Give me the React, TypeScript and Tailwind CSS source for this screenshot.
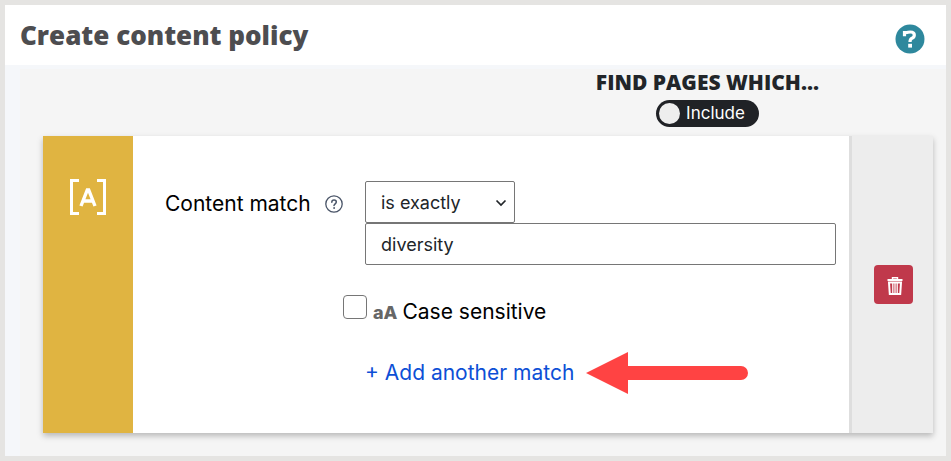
import { useState } from "react";

function HelpBadge() {
    return (
        <svg viewBox="0 0 30 30" className="size-[30px]" aria-hidden="true">
            <circle cx="15" cy="15" r="14.5" fill="#2e889d" />
            <path
                d="M9.500 12.300V8.500H12M11 8.800Q13 8 15.300 8Q19.300 8 19.300 11Q19.300 13.400 17 14.200Q15 15 15 18"
                fill="none"
                stroke="#fff"
                strokeWidth="3.200"
            />
            <rect x="13.200" y="19.800" width="3.800" height="3.800" fill="#fff" />
        </svg>
    );
}

function ContentIcon() {
    return (
        <svg viewBox="0 0 36 36" className="size-9" aria-hidden="true">
            <path d="M9 1.500H1.500V34.500H9M27 1.500H34.500V34.500H27" fill="none" stroke="#fff" strokeWidth="3" />
            <path
                d="M11 27L17.300 11H18.700L25 27M13.500 22H22.500"
                fill="none"
                stroke="#fff"
                strokeWidth="3.400"
            />
        </svg>
    );
}

function HelpIcon() {
    return (
        <svg viewBox="0 0 18 18" className="size-[18px]" fill="none" stroke="#4a5568" strokeLinecap="round" aria-hidden="true">
            <circle cx="9" cy="9" r="8.200" strokeWidth="1.300" />
            <path d="M6.800 7.200C6.800 4.200 11.300 4.300 11.300 7.100C11.300 8.800 9 8.900 9 10.600" strokeWidth="1.500" />
            <circle cx="9" cy="13" r="0.500" fill="#4a5568" strokeWidth="0.800" />
        </svg>
    );
}

function TrashIcon() {
    return (
        <svg viewBox="0 0 16 18" className="h-[18px] w-4" fill="none" stroke="#fff" aria-hidden="true">
            <path d="M5.500 2V0.800H10.500V2" strokeWidth="1.400" />
            <path d="M0.500 3H15.500" strokeWidth="2" />
            <path d="M2 5.500H14L13.200 17H2.800Z" strokeWidth="2" />
            <path d="M5.800 6V16M8 6V16M10.200 6V16" strokeWidth="1.300" />
        </svg>
    );
}

function Arrow() {
    return (
        <svg viewBox="0 0 162 42" className="h-[42px] w-[162px]" fill="#ff4343" aria-hidden="true">
            <path d="M0 21L42 0V14H155A7 7 0 0 1 155 28H42V42Z" />
        </svg>
    );
}

export default function App() {
    const [include, setInclude] = useState(true);
    const [mode, setMode] = useState("exactly");
    const [value, setValue] = useState("diversity");

    return (
        <div className="border-[5px] border-[#e5e4e2] bg-white font-['Inter',sans-serif] text-black">
            <header className="flex h-[60px] items-center justify-between pr-[21px] pl-[15px]">
                <h1 className="font-['Open_Sans',sans-serif] text-[26px] leading-9 font-extrabold text-[#4d4d50]">
                    Create content policy
                </h1>
                <button type="button" aria-label="Help" className="mt-2">
                    <HelpBadge />
                </button>
            </header>

            <main className="bg-[#f5f7fa] pt-1 pl-[15px]">
                <div className="bg-[#f5f5f5] pr-[13px] pb-[23px] pl-[23px]">
                    <div className="ml-auto flex w-1/2 flex-col items-center pr-1.5 pb-[9px]">
                        <h2 className="font-['Open_Sans',sans-serif] text-[21px] leading-[26px] font-extrabold whitespace-nowrap text-[#212529]">
                            FIND PAGES WHICH...
                        </h2>
                        <button
                            type="button"
                            role="switch"
                            aria-checked={include}
                            onClick={() => setInclude(!include)}
                            className="mt-[5px] flex h-[27px] items-center gap-1.5 rounded-full bg-[#202226] pr-3.5 pb-0.5 pl-[3px] text-[17px] leading-6 text-white"
                        >
                            <span className="mt-0.5 size-[21px] rounded-full bg-[#eee]" />
                            {include ? "Include" : "Exclude"}
                        </button>
                    </div>

                    <section className="flex min-h-[297px] shadow-[0_3px_6px_rgba(0,0,0,0.25)]">
                        <div className="flex w-[90px] shrink-0 justify-center bg-[#e0b441] pt-[43px]">
                            <ContentIcon />
                        </div>

                        <div className="flex-1 bg-white pt-[45px] pr-[13px] pl-8">
                            <div className="flex">
                                <div className="flex h-[45px] w-[200px] shrink-0 items-center gap-3.5 text-[21px]">
                                    <label htmlFor="mode" className="whitespace-nowrap">Content match</label>
                                    <button type="button" aria-label="About content match">
                                        <HelpIcon />
                                    </button>
                                </div>
                                <div className="flex-1 text-lg text-[#212529]">
                                    <div className="relative w-[150px]">
                                        <select
                                            id="mode"
                                            value={mode}
                                            onChange={(e) => setMode(e.target.value)}
                                            className="block h-[42px] w-full appearance-none rounded-xs border border-[#767676] bg-white pt-0.5 pl-[15px]"
                                        >
                                            <option value="exactly">is exactly</option>
                                            <option value="contains">contains</option>
                                        </select>
                                        <svg
                                            viewBox="0 0 12 8"
                                            className="pointer-events-none absolute top-[18px] right-2 h-2 w-3"
                                            fill="none"
                                            stroke="#212529"
                                            strokeWidth="1.700"
                                            aria-hidden="true"
                                        >
                                            <path d="M1.500 1.500L6 6L10.500 1.500" />
                                        </svg>
                                    </div>
                                    <input
                                        type="text"
                                        aria-label="Text to match"
                                        value={value}
                                        onChange={(e) => setValue(e.target.value)}
                                        className="block h-[42px] w-full rounded-xs border border-[#767676] bg-white pl-[15px]"
                                    />
                                </div>
                            </div>

                            <div className="mt-[30px] ml-[178px] flex items-start text-[21px]">
                                <input
                                    id="case"
                                    type="checkbox"
                                    className="size-6 appearance-none rounded-[4px] border border-[#767676] bg-white checked:bg-[#0d4fd6]"
                                />
                                <label htmlFor="case" className="flex items-baseline gap-[5px] pt-[3px] pl-1.5 leading-7">
                                    <span className="text-lg leading-7 font-extrabold text-[#666]">aA</span>
                                    Case sensitive
                                </label>
                            </div>

                            <div className="mt-[25px] ml-[200px] flex items-center gap-3">
                                <a href="#add" className="text-[21px] whitespace-nowrap text-[#0d4fd6]">
                                    + Add another match
                                </a>
                                <Arrow />
                            </div>
                        </div>

                        <div className="flex w-[84px] shrink-0 items-center justify-center border-l-[3px] border-[#dedede] bg-[#ededed] pl-0.5">
                            <button
                                type="button"
                                aria-label="Delete"
                                className="flex size-[39px] items-center justify-center rounded-[4px] bg-[#c0394b] pt-0.5 pl-0.5"
                            >
                                <TrashIcon />
                            </button>
                        </div>
                    </section>
                </div>
            </main>
        </div>
    );
}
